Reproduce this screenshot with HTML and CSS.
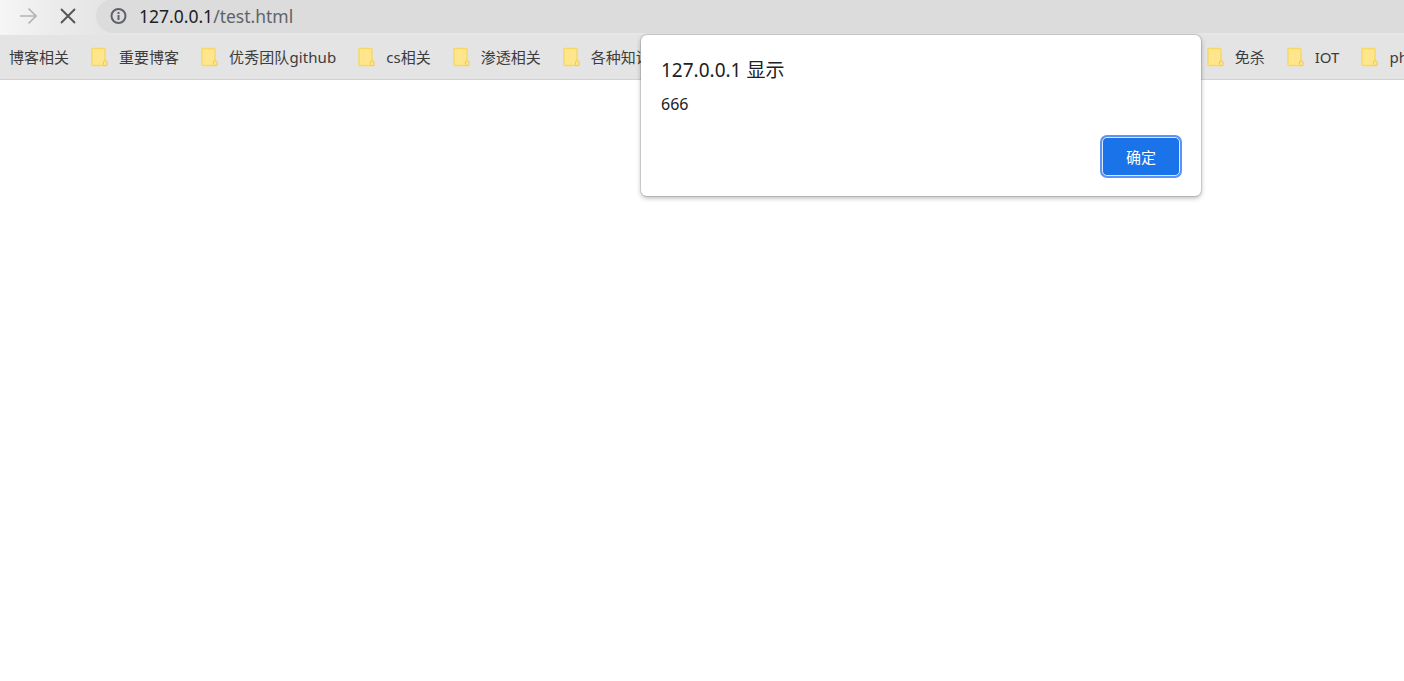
FILE: index.html
```html
<!DOCTYPE html>
<html lang="zh-CN">
<head>
<meta charset="utf-8">
<title>127.0.0.1/test.html</title>
<link rel="stylesheet" href="styles.css">
</head>
<body>
<header class="chrome">
  <div class="toolbar">
    <button class="nav-btn forward" aria-label="前进">
      <svg width="20" height="20" viewBox="0 0 20 20"><path d="M2 10H18M10.5 2.5L18 10L10.5 17.5" fill="none" stroke="#b4b4b4" stroke-width="1.7"/></svg>
    </button>
    <button class="nav-btn stop" aria-label="停止">
      <svg width="20" height="20" viewBox="0 0 20 20"><path d="M3 3L17 17M17 3L3 17" fill="none" stroke="#555" stroke-width="1.9"/></svg>
    </button>
    <div class="omnibox">
      <svg class="info" width="18" height="18" viewBox="0 0 18 18"><circle cx="8.5" cy="9" r="7" fill="none" stroke="#5f6368" stroke-width="2"/><rect x="7.5" y="8" width="2" height="5" fill="#5f6368"/><rect x="7.5" y="5" width="2" height="2" fill="#5f6368"/></svg>
      <span class="url">127.0.0.1<span class="path">/test.html</span></span>
    </div>
  </div>
  <nav class="bookmarks">
    <span class="bm-text first">博客相关</span>
    <span class="bm"><svg class="folder" width="17" height="20" viewBox="0 0 17 20"><use href="#note"/></svg><span class="bm-text">重要博客</span></span>
    <span class="bm"><svg class="folder" width="17" height="20" viewBox="0 0 17 20"><use href="#note"/></svg><span class="bm-text bm-wide">优秀团队github</span></span>
    <span class="bm"><svg class="folder" width="17" height="20" viewBox="0 0 17 20"><use href="#note"/></svg><span class="bm-text">cs相关</span></span>
    <span class="bm"><svg class="folder" width="17" height="20" viewBox="0 0 17 20"><use href="#note"/></svg><span class="bm-text">渗透相关</span></span>
    <span class="bm"><svg class="folder" width="17" height="20" viewBox="0 0 17 20"><use href="#note"/></svg><span class="bm-text">各种知识</span></span>
    <span class="bm-spacer"></span>
    <span class="bm"><svg class="folder" width="17" height="20" viewBox="0 0 17 20"><use href="#note"/></svg><span class="bm-text">免杀</span></span>
    <span class="bm"><svg class="folder" width="17" height="20" viewBox="0 0 17 20"><use href="#note"/></svg><span class="bm-text">IOT</span></span>
    <span class="bm"><svg class="folder" width="17" height="20" viewBox="0 0 17 20"><use href="#note"/></svg><span class="bm-text">php</span></span>
  </nav>
</header>
<svg class="defs" width="0" height="0" aria-hidden="true">
  <symbol id="note" viewBox="0 0 17 20">
    <path d="M1 1.5H13Q14 1.5 14 2.5V15H15.5V18.5H1.8Q1 18.5 1 17.7Z" fill="#ffe68c" stroke="#f7d766" stroke-width="1.4" stroke-linejoin="round"/>
    <rect x="12.5" y="14" width="3.5" height="4.5" rx="1" fill="#ffe68c" stroke="#f2c94c" stroke-width="1"/>
  </symbol>
</svg>
<section class="dialog" role="alertdialog">
  <h1 class="dialog-title">127.0.0.1 显示</h1>
  <p class="dialog-msg">666</p>
  <div class="dialog-actions"><button class="ok">确定</button></div>
</section>
</body>
</html>
```

FILE: styles.css
```css
* { box-sizing: border-box; }
html, body { margin: 0; height: 100%; background: #fff; overflow: hidden; }
body {
  font-family: "Noto Sans", "Noto Sans CJK SC", sans-serif;
  position: relative;
}
.chrome { width: 1404px; }
.toolbar {
  height: 35px;
  display: flex;
  align-items: flex-start;
  background: linear-gradient(90deg, #f6f6f6 0, #ececec 50px, #e6e6e6 96px);
  overflow: hidden;
}
.nav-btn {
  flex: none;
  border: 0;
  padding: 0;
  background: none;
  display: flex;
  align-items: center;
  justify-content: center;
  height: 32px;
}
.forward { width: 20px; margin-left: 18px; }
.stop { width: 20px; margin-left: 20px; }
.omnibox {
  flex: none;
  width: 1340px;
  margin-left: 18px;
  height: 34px;
  border-radius: 17px 0 0 17px;
  background: #dcdcdc;
  display: flex;
  align-items: center;
  padding-left: 14px;
  margin-top: -1px;
}
.info { flex: none; }
.url {
  margin-left: 11px;
  font-size: 17.5px;
  line-height: 32px;
  color: #202124;
  white-space: nowrap;
}
.path { color: #5f6368; }
.bookmarks {
  height: 45px;
  background: #e4e4e4;
  border-bottom: 1px solid #d2d2d2;
  display: flex;
  align-items: center;
  padding-left: 9px;
  gap: 22px;
  overflow: hidden;
  white-space: nowrap;
}
.bm { flex: none; display: flex; align-items: center; gap: 11px; }
.folder { flex: none; }
.bm-text { font-size: 15px; line-height: 20px; color: #3c3c3c; }
.bm-wide { letter-spacing: 0.1px; }
.first { flex: none; }
.bm-spacer { flex: 0 0 512px; }
.defs { position: absolute; }
.dialog {
  position: absolute;
  left: 641px;
  top: 35px;
  width: 560px;
  height: 161px;
  background: #fff;
  border-radius: 6px;
  box-shadow: 0 0 0 1px rgba(0,0,0,.1), 0 2px 5px rgba(0,0,0,.3);
  padding: 22px 20px 20px;
  display: flex;
  flex-direction: column;
}
.dialog-title {
  margin: 0;
  font-size: 19px;
  font-weight: 400;
  line-height: 26px;
  color: #202124;
}
.dialog-msg {
  margin: 10px 0 0;
  font-size: 16px;
  line-height: 22px;
  color: #202124;
}
.dialog-actions {
  margin-top: auto;
  display: flex;
  justify-content: flex-end;
  padding-right: 1px;
}
.ok {
  width: 78px;
  height: 39px;
  border: 1px solid #dbe8fd;
  box-shadow: 0 0 0 2px #5b94f5;
  border-radius: 5px;
  background: #1a73e8;
  color: #fff;
  font-family: inherit;
  font-size: 15px;
  padding: 0;
}
```
